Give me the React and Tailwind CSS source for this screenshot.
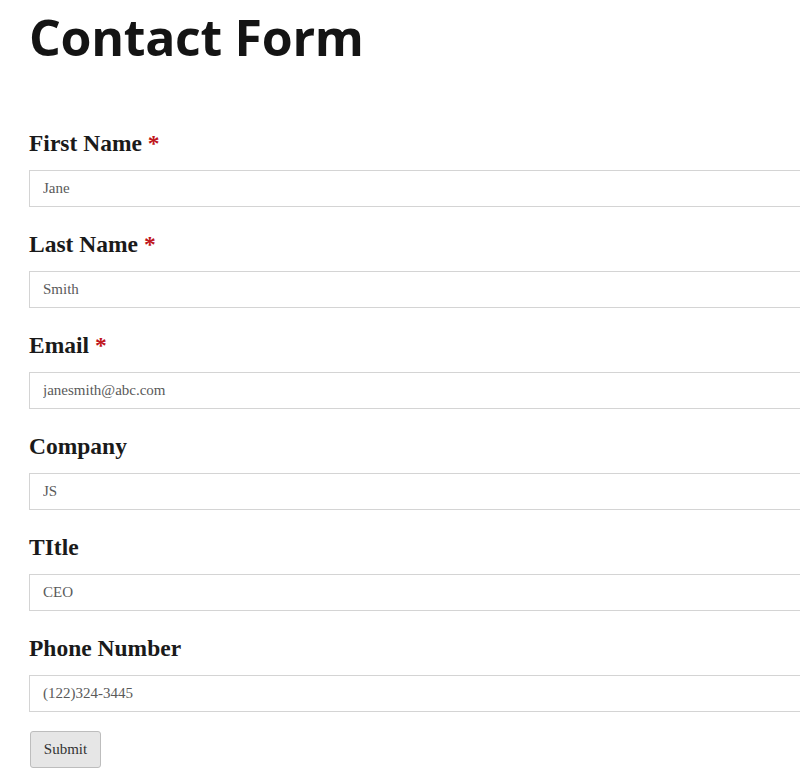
import React from "react";

const fields = [
  { label: "First Name", value: "Jane", required: true },
  { label: "Last Name", value: "Smith", required: true },
  { label: "Email", value: "janesmith@abc.com", required: true },
  { label: "Company", value: "JS" },
  { label: "TItle", value: "CEO" },
  { label: "Phone Number", value: "(122)324-3445" },
];

const Field = ({ label, value, required }) => (
  <div className="mb-[24px]">
    <label className="block text-[23.5px] leading-[26px] font-bold text-[#1a1a1a] mb-[14px] font-['Liberation_Serif',serif]">
      {label}
      {required && <span className="text-[#c0161c]"> *</span>}
    </label>
    <input
      type="text"
      defaultValue={value}
      className="block w-[790px] h-[37px] px-[13px] border border-[#d4d4d4] bg-white text-[15px] text-[#5a5a5a] font-['Liberation_Serif',serif] outline-none"
    />
  </div>
);

export default function App() {
  return (
    <div className="w-[800px] h-[780px] overflow-hidden bg-white pl-[29px]">
      <h1 className="text-[50px] leading-normal font-bold text-[#141414] tracking-[-0.3px] font-['Open_Sans',sans-serif] mb-[55px]">
        Contact Form
      </h1>
      <form onSubmit={(e) => e.preventDefault()}>
        {fields.map((f) => (
          <Field key={f.label} {...f} />
        ))}
        <button
          type="submit"
          className="mt-[-5px] ml-px w-[71px] h-[37px] bg-[#e6e6e6] border border-[#bdbdbd] rounded-[3px] text-[15px] text-[#333] font-['Liberation_Serif',serif]"
        >
          Submit
        </button>
      </form>
    </div>
  );
}
